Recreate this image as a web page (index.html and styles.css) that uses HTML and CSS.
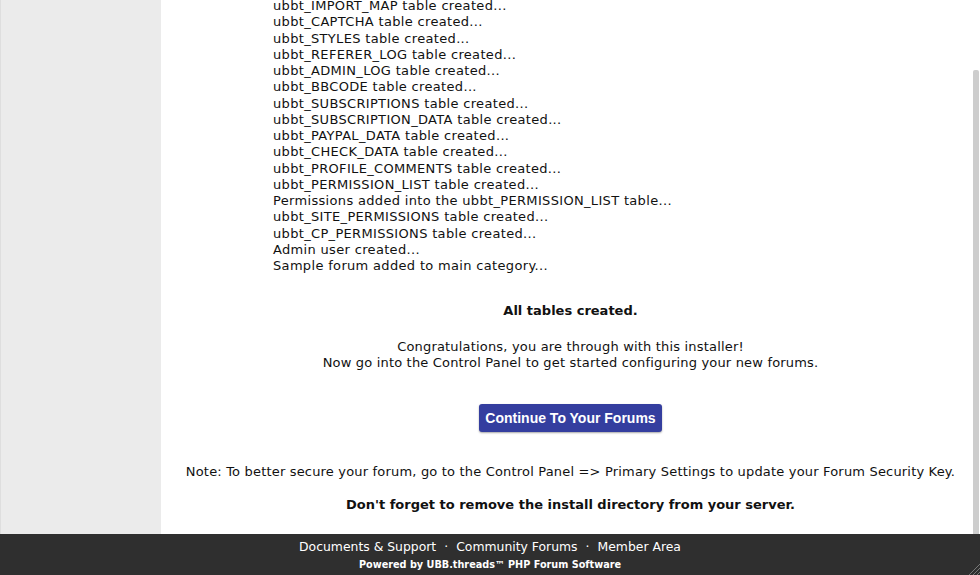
FILE: index.html
```html
<!DOCTYPE html>
<html>
<head>
<meta charset="utf-8">
<link rel="stylesheet" href="styles.css">
</head>
<body>
<div class="page">
  <div class="sidebar"></div>
  <div class="main">
    <div class="log">
      <div>ubbt_IMPORT_MAP table created...</div>
      <div>ubbt_CAPTCHA table created...</div>
      <div>ubbt_STYLES table created...</div>
      <div>ubbt_REFERER_LOG table created...</div>
      <div>ubbt_ADMIN_LOG table created...</div>
      <div>ubbt_BBCODE table created...</div>
      <div>ubbt_SUBSCRIPTIONS table created...</div>
      <div>ubbt_SUBSCRIPTION_DATA table created...</div>
      <div>ubbt_PAYPAL_DATA table created...</div>
      <div>ubbt_CHECK_DATA table created...</div>
      <div>ubbt_PROFILE_COMMENTS table created...</div>
      <div>ubbt_PERMISSION_LIST table created...</div>
      <div>Permissions added into the ubbt_PERMISSION_LIST table...</div>
      <div>ubbt_SITE_PERMISSIONS table created...</div>
      <div>ubbt_CP_PERMISSIONS table created...</div>
      <div>Admin user created...</div>
      <div>Sample forum added to main category...</div>
    </div>
    <div class="done">All tables created.</div>
    <div class="congrats">Congratulations, you are through with this installer!<br>Now go into the Control Panel to get started configuring your new forums.</div>
    <div class="btnrow"><a class="btn" href="#">Continue To Your Forums</a></div>
    <div class="note">Note: To better secure your forum, go to the Control Panel =&gt; Primary Settings to update your Forum Security Key.</div>
    <div class="warn">Don't forget to remove the install directory from your server.</div>
    <div class="scrollthumb"></div>
  </div>
</div>
<div class="footer">
  <div class="links"><a href="#">Documents &amp; Support</a><span class="dot">·</span><a href="#">Community Forums</a><span class="dot">·</span><a href="#">Member Area</a></div>
  <div class="powered">Powered by UBB.threads™ PHP Forum Software</div>
  <svg class="grip" width="12" height="12" viewBox="0 0 12 12"><path d="M12 1 L1 12 M12 5 L5 12 M12 9 L9 12" stroke="#777" stroke-width="1"/></svg>
</div>
</body>
</html>
```
FILE: styles.css
```css
html, body {
  margin: 0;
  padding: 0;
  background: #fff;
}
body {
  font-family: "DejaVu Sans", Verdana, sans-serif;
  color: #111;
  width: 980px;
  height: 575px;
  overflow: hidden;
}
.page {
  display: flex;
  height: 534px;
}
.sidebar {
  width: 160px;
  background: #ebebeb;
  border-left: 1px solid #dedede;
}
.main {
  flex: 1;
  position: relative;
  background: #fff;
  text-align: center;
}
.log {
  text-align: left;
  margin: -2px 0 0 112px;
  font-size: 13px;
  line-height: 16.25px;
  letter-spacing: 0.33px;
}
.done {
  font-weight: bold;
  font-size: 13px;
  line-height: 16px;
  margin-top: 29px;
}
.congrats {
  font-size: 13px;
  line-height: 16px;
  letter-spacing: 0.18px;
  margin-top: 20px;
}
.btnrow {
  margin-top: 33px;
  display: flex;
  justify-content: center;
}
.btn {
  display: block;
  width: 183px;
  height: 28px;
  line-height: 28px;
  background: #343e9f;
  color: #fff;
  font-family: "Liberation Sans", Arial, sans-serif;
  font-weight: bold;
  font-size: 14px;
  text-decoration: none;
  border-radius: 3px;
  box-shadow: 0 1px 2px rgba(0,0,0,0.35);
}
.note {
  font-size: 13px;
  line-height: 16px;
  letter-spacing: 0.18px;
  margin-top: 32px;
}
.warn {
  font-weight: bold;
  font-size: 13px;
  line-height: 16px;
  margin-top: 17px;
}
.scrollthumb {
  position: absolute;
  right: 1px;
  top: 70px;
  bottom: 0;
  width: 6px;
  background: #cdcdcd;
  border-radius: 2px 2px 0 0;
}
.footer {
  position: relative;
  height: 41px;
  background: #2f2f2f;
  text-align: center;
  color: #fff;
}
.links {
  padding-top: 5px;
  font-size: 12.4px;
  line-height: 16px;
}
.links a {
  color: #fff;
  text-decoration: none;
}
.dot {
  margin: 0 8px;
}
.powered {
  font-size: 9.7px;
  font-weight: bold;
  line-height: 14px;
  margin-top: 3px;
}
.grip {
  position: absolute;
  right: 0;
  bottom: 0;
}
```
